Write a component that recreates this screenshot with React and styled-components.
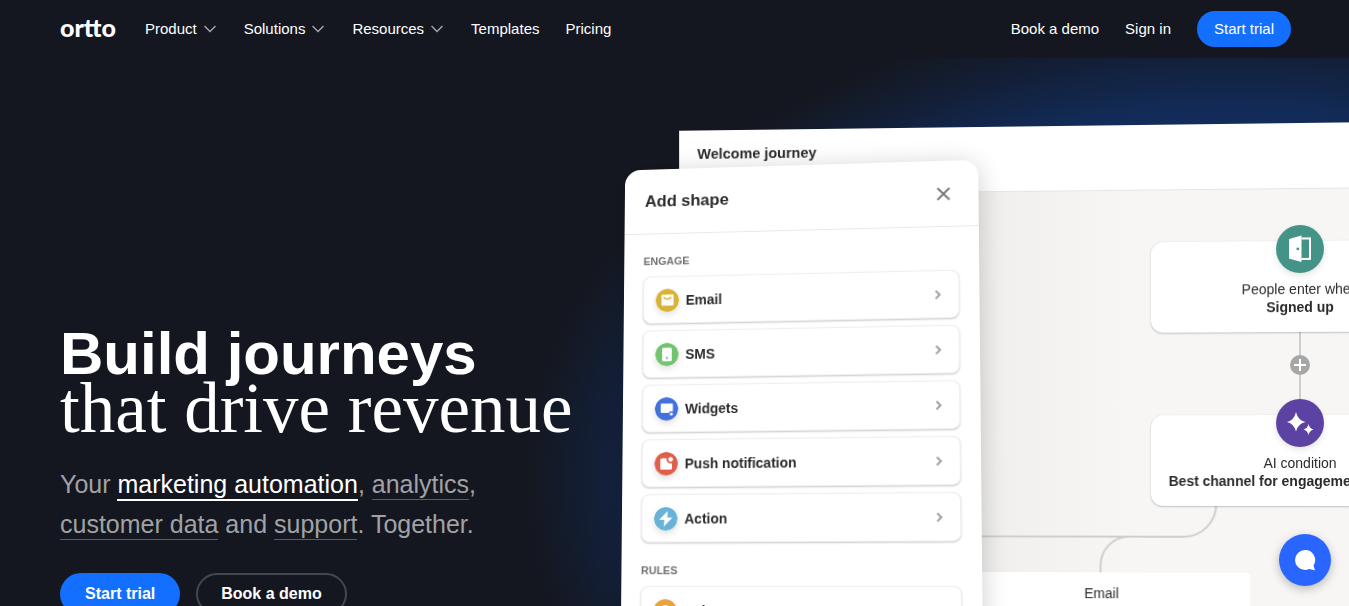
import React, { Component } from 'react';
import styled, { createGlobalStyle } from 'styled-components';

const GlobalStyle = createGlobalStyle`
    * {
        box-sizing: border-box;
    }

    body {
        margin: 0;
        background: #14171f;
        color: #fff;
        font-family: "Liberation Sans", Arial, sans-serif;
    }

    button {
        font-family: inherit;
        cursor: pointer;
    }
`;

const Page = styled.div`
    display: flex;
    flex-direction: column;
    height: 100vh;
    overflow: hidden;
`;

const Header = styled.header`
    display: flex;
    flex: none;
    align-items: center;
    height: 58px;
    padding: 0 58px 0 60px;
`;

const Logo = styled.a`
    margin-right: 29px;
    padding-bottom: 5px;
    color: #fff;
    font: 900 25px/30px Lato, sans-serif;
    text-decoration: none;
`;

const Nav = styled.nav`
    display: flex;
    align-items: center;
    gap: 26px;

    &:last-child {
        margin-left: auto;
    }
`;

const NavLink = styled.a`
    color: #fff;
    font-size: 15px;
    line-height: 20px;
    text-decoration: none;
`;

const NavMenu = styled.button`
    display: flex;
    align-items: center;
    gap: 7px;
    padding: 0 2px 0 0;
    border: 0;
    background: none;
    color: #fff;
    font-size: 15px;
    line-height: 20px;

    svg {
        color: #a3a5aa;
    }
`;

const PillLink = styled.a`
    display: flex;
    align-items: center;
    justify-content: center;
    height: 36px;
    padding: 0 17px;
    border-radius: 21px;
    background: #136fff;
    color: #fff;
    font-size: 15px;
    line-height: 20px;
    text-decoration: none;
`;

const HeroLink = styled(PillLink)`
    height: 42px;
    padding: 0 ${props => (props.$outline ? '23px' : '25px')};
    border: ${props => (props.$outline ? '2px solid #44474e' : '0')};
    background: ${props => (props.$outline ? 'transparent' : '#136fff')};
    font-size: 16px;
    font-weight: 700;
`;

const Hero = styled.main`
    display: grid;
    flex: 1;
    grid-template-columns: 46% minmax(0, 1fr);
    min-height: 0;
    overflow: hidden;
    background: radial-gradient(690px 470px at 91% 422px, #12398a 0%, #122f66 70%, #122a55 80%, #13203a 90%, #14171f 102%);
`;

const Copy = styled.section`
    padding: 269px 0 0 60px;
`;

const Title = styled.h1`
    margin: 0 0 29px;
    font-size: 60px;
    line-height: 54px;
    white-space: nowrap;

    span {
        display: block;
        font-family: "Liberation Serif", "Times New Roman", serif;
        font-size: 71px;
        font-weight: 400;
    }
`;

const Lead = styled.p`
    max-width: 440px;
    margin: 0 0 29px;
    color: #a1a2a5;
    font-size: 25px;
    line-height: 40px;
`;

const LeadLink = styled.a`
    padding-bottom: 1px;
    border-bottom: ${props => (props.$active ? '2px solid #fff' : '1px solid #5a5c62')};
    color: ${props => (props.$active ? '#fff' : 'inherit')};
    text-decoration: none;
`;

const Actions = styled.div`
    display: flex;
    gap: 16px;
`;

const Stage = styled.section`
    position: relative;
    min-height: 0;
    color: #2b2b2d;
`;

const Board = styled.div`
    width: 1000px;
    height: 760px;
    margin: 65px 0 0 44px;
    outline: 1px solid transparent;
    background: #f7f6f4;
    transform: perspective(1000px) rotateY(-2deg);
    transform-origin: 635px 357px;
`;

const BoardHeader = styled.div`
    height: 66px;
    padding: 14px 19px;
    border-bottom: 1px solid #e6e5e3;
    background: #fff;
    font-size: 15px;
    font-weight: 700;
    line-height: 20px;
`;

const Canvas = styled.div`
    position: relative;
    height: 690px;
    background: linear-gradient(90deg, #efeeec 300px, #f7f6f4 460px);
`;

const Wires = styled.svg`
    position: absolute;
    top: 0;
    left: 0;
    fill: none;
    stroke: #cfcfca;
    stroke-width: 2;
`;

const Node = styled.div`
    position: absolute;
    top: ${props => props.$top}px;
    left: ${props => props.$left}px;
    width: 300px;
    height: ${props => (props.$plain ? '120px' : '91px')};
    padding: ${props => (props.$plain ? '12px' : '39px')} 18px 0;
    border-radius: ${props => (props.$plain ? '3px' : '12px')};
    background: #fff;
    box-shadow: ${props => (props.$plain ? 'none' : '0 0 1px rgba(0, 0, 0, 0.2), 0 1px 2px rgba(0, 0, 0, 0.2)')};
    font-size: 14px;
    line-height: 18px;
    text-align: center;

    strong {
        display: block;
        text-align: ${props => (props.$long ? 'left' : 'center')};
        white-space: nowrap;
    }
`;

const NodeBadge = styled.div`
    position: absolute;
    top: -16px;
    left: 126px;
    width: 48px;
    height: 48px;
    border-radius: 50%;
    background: ${props => props.$color};
    box-shadow: 0 3px 6px rgba(0, 0, 0, 0.1);
`;

const AddStep = styled.button`
    position: absolute;
    top: 166px;
    left: 625px;
    width: 20px;
    height: 20px;
    padding: 0;
    border: 0;
    border-radius: 50%;
    background: #a6a6a6;

    svg {
        display: block;
    }
`;

const Panel = styled.aside`
    position: absolute;
    top: 99px;
    left: -2px;
    width: 361px;
    height: 760px;
    border-radius: 16px;
    background: #fff;
    box-shadow: 0 4px 26px rgba(0, 0, 0, 0.2);
    transform: perspective(1000px) rotateX(3deg) rotateY(-4deg);
    transform-origin: 50% 387px;
`;

const PanelHeader = styled.div`
    display: flex;
    align-items: center;
    justify-content: space-between;
    height: 68px;
    padding: 0 28px 0 21px;
    border-bottom: 1px solid #e9e9e9;

    h2 {
        margin: 0;
        font-size: 17px;
        line-height: 20px;
    }

    button {
        padding: 0;
        border: 0;
        background: none;
        color: #77787b;
    }

    svg {
        display: block;
    }
`;

const ShapeGroup = styled.div`
    display: flex;
    flex-direction: column;
    gap: 7px;
    padding: 19px 20px 0;

    h3 {
        margin: 0;
        color: #707174;
        font-size: 11px;
        line-height: 18px;
    }
`;

const ShapeRow = styled.button`
    display: flex;
    align-items: center;
    gap: 7px;
    height: 49px;
    padding: 0 17px 0 12px;
    border: 1px solid #efefef;
    border-radius: 8px;
    background: #fff;
    box-shadow: 0 1px 2px rgba(0, 0, 0, 0.22);
    color: #2b2b2d;
    font-size: 14px;
    font-weight: 700;
    text-align: left;

    svg {
        flex: none;
    }

    span {
        flex: 1;
    }
`;

const ShapeIcon = styled.svg`
    border-radius: 50%;
    box-shadow: 0 3px 6px rgba(0, 0, 0, 0.12);
    fill: #fff;
`;

const ChatButton = styled.button`
    position: fixed;
    right: 18px;
    bottom: 20px;
    width: 52px;
    height: 52px;
    padding: 0;
    border: 0;
    border-radius: 50%;
    background: #2965ff;
    box-shadow: 0 3px 10px rgba(0, 0, 0, 0.25);

    svg {
        display: block;
    }
`;

const menus = ['Product', 'Solutions', 'Resources'];

const engage = [
    {
        label: 'Email',
        color: '#d9b335',
        icon: <path fillRule="evenodd" d="M7 6h10.500a1 1 0 0 1 1 1v9.500a1 1 0 0 1-1 1H7a1 1 0 0 1-1-1V7a1 1 0 0 1 1-1zM8.600 7.900L7.700 9.200Q9.500 11.500 12.200 11.500T16.700 9.200L15.800 7.900Q14.300 9.800 12.200 9.800T8.600 7.900z" />,
    },
    {
        label: 'SMS',
        color: '#73c46f',
        icon: <path fillRule="evenodd" d="M8.500 5h7a1.500 1.500 0 0 1 1.500 1.500v11a1.500 1.500 0 0 1-1.500 1.500h-7A1.500 1.500 0 0 1 7 17.500v-11A1.500 1.500 0 0 1 8.500 5zM12 14.400a1.200 1.200 0 1 0 0 2.400a1.200 1.200 0 0 0 0-2.400z" />,
    },
    {
        label: 'Widgets',
        color: '#4271dc',
        icon: <><path d="M7 6.500h10.500a1 1 0 0 1 1 1V14.500H15v1.500H7a1 1 0 0 1-1-1V7.500a1 1 0 0 1 1-1z" /><circle cx="17" cy="17.300" r="1.500" /></>,
    },
    {
        label: 'Push notification',
        color: '#df5f4b',
        icon: <><path d="M7.500 6.500h5a4.200 4.200 0 0 0 5.500 5v5a1.500 1.500 0 0 1-1.500 1.500h-9A1.500 1.500 0 0 1 6 16.500V8a1.500 1.500 0 0 1 1.500-1.500z" /><circle cx="16.600" cy="7.600" r="2.400" /></>,
    },
    {
        label: 'Action',
        color: '#68b2d8',
        icon: <path d="M14 4L5.200 13h5.300L9.900 20l8.900-9.200h-5.300z" />,
    },
];

const rules = [
    {
        label: 'Delay',
        color: '#eba342',
        icon: <circle cx="12" cy="12" r="6" />,
    },
];

class ShapeList extends Component {
    render() {
        return (
            <ShapeGroup>
                <h3>{this.props.title}</h3>
                {this.props.shapes.map(({ label, color, icon }) => (
                    <ShapeRow type="button" key={label}>
                        <ShapeIcon width="24" height="24" viewBox="0 0 24 24">
                            <circle cx="12" cy="12" r="12" fill={color} />
                            {icon}
                        </ShapeIcon>
                        <span>{label}</span>
                        <svg width="7" height="10" viewBox="0 0 7 10" fill="none" stroke="#a1a1a3" strokeWidth="2">
                            <path d="M1.500 1l4 4-4 4" />
                        </svg>
                    </ShapeRow>
                ))}
            </ShapeGroup>
        )
    }
}

class Journey extends Component {
    render() {
        return (
            <Board>
                <BoardHeader>Welcome journey</BoardHeader>
                <Canvas>
                    <Wires width="1000" height="690">
                        <path d="M635 140V230" />
                        <path d="M551 315a33 33 0 0 1-33 33H300" />
                        <path d="M463 348a29 29 0 0 0-29 29V390" />
                    </Wires>

                    <Node $top={52} $left={485}>
                        <NodeBadge $color="#439487">
                            <svg width="48" height="48" viewBox="0 0 48 48">
                                <path fill="#fff" fillRule="evenodd" d="M13 14L25.500 10.500V37L13 33.500zM21.800 22.500a1.400 1.400 0 1 0 0 2.800a1.400 1.400 0 0 0 0-2.800z" />
                                <path d="M25.500 13.500H34V34H25.500" fill="none" stroke="#fff" strokeWidth="2" />
                            </svg>
                        </NodeBadge>
                        People enter when
                        <strong>Signed up</strong>
                    </Node>

                    <AddStep type="button" aria-label="Add step">
                        <svg width="20" height="20" viewBox="0 0 20 20" stroke="#fff" strokeWidth="2">
                            <path d="M10 4v12M4 10h12" />
                        </svg>
                    </AddStep>

                    <Node $top={226} $left={485} $long>
                        <NodeBadge $color="#5c42a3">
                            <svg width="48" height="48" viewBox="0 0 48 48" fill="#fff">
                                <path d="M20 13Q21.800 21.200 29.500 23Q21.800 24.800 20 32.500Q18.200 24.800 11 23Q18.200 21.200 20 13z" />
                                <path d="M32.500 25Q33.500 29.500 37.500 30.500Q33.500 31.500 32.500 36Q31.500 31.500 27.500 30.500Q31.500 29.500 32.500 25z" />
                            </svg>
                        </NodeBadge>
                        AI condition
                        <strong>Best channel for engagement</strong>
                    </Node>

                    <Node $top={384} $left={285} $plain>Email</Node>
                </Canvas>
            </Board>
        )
    }
}

class App extends Component {
    render() {
        return (
            <Page>
                <GlobalStyle />
                <Header>
                    <Logo href="#home">ortto</Logo>
                    <Nav>
                        {menus.map(menu => (
                            <NavMenu type="button" key={menu}>
                                {menu}
                                <svg width="12" height="8" viewBox="0 0 12 8" fill="none" stroke="currentColor">
                                    <path d="M.5 1L6 6.500 11.500 1" strokeWidth="1.500" />
                                </svg>
                            </NavMenu>
                        ))}
                        <NavLink href="#templates">Templates</NavLink>
                        <NavLink href="#pricing">Pricing</NavLink>
                    </Nav>
                    <Nav>
                        <NavLink href="#demo">Book a demo</NavLink>
                        <NavLink href="#login">Sign in</NavLink>
                        <PillLink href="#trial">Start trial</PillLink>
                    </Nav>
                </Header>

                <Hero>
                    <Copy>
                        <Title>
                            Build journeys
                            <span>that drive revenue</span>
                        </Title>
                        <Lead>
                            Your <LeadLink href="#marketing" $active>marketing automation</LeadLink>,{' '}
                            <LeadLink href="#analytics">analytics</LeadLink>,{' '}
                            <LeadLink href="#data">customer data</LeadLink> and{' '}
                            <LeadLink href="#support">support</LeadLink>. Together.
                        </Lead>
                        <Actions>
                            <HeroLink href="#trial">Start trial</HeroLink>
                            <HeroLink href="#demo" $outline>Book a demo</HeroLink>
                        </Actions>
                    </Copy>

                    <Stage>
                        <Journey />
                        <Panel>
                            <PanelHeader>
                                <h2>Add shape</h2>
                                <button type="button" aria-label="Close">
                                    <svg width="14" height="14" viewBox="0 0 14 14" fill="none" stroke="currentColor" strokeWidth="2">
                                        <path d="M1 1l12 12M13 1L1 13" />
                                    </svg>
                                </button>
                            </PanelHeader>
                            <ShapeList title="ENGAGE" shapes={engage} />
                            <ShapeList title="RULES" shapes={rules} />
                        </Panel>
                    </Stage>
                </Hero>

                <ChatButton type="button" aria-label="Open chat">
                    <svg width="52" height="52" viewBox="0 0 52 52" fill="#fff">
                        <path d="M26 16a10 10 0 1 0 0 20c1.500 0 2.800-.3 4-.9L36 36.300l-1.500-4.800A10 10 0 0 0 26 16z" />
                    </svg>
                </ChatButton>
            </Page>
        )
    }
}

export default App
